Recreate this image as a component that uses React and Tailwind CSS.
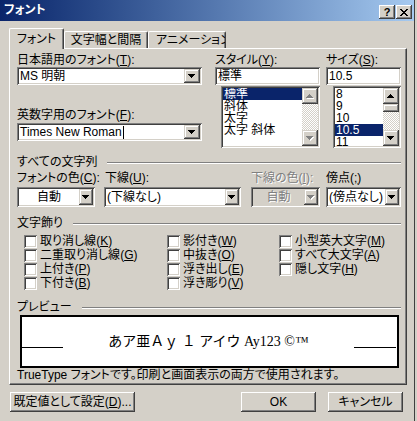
import React from 'react';

const raisedBtn = "bg-[#d4d0c8] shadow-[inset_-1px_-1px_0_#404040,inset_1px_1px_0_#ffffff,inset_-2px_-2px_0_#808080,inset_2px_2px_0_#d4d0c8]";
const raisedCtl = "bg-[#d4d0c8] shadow-[inset_-1px_-1px_0_#404040,inset_1px_1px_0_#d4d0c8,inset_-2px_-2px_0_#808080,inset_2px_2px_0_#ffffff]";
const sunken = "shadow-[inset_1px_1px_0_#808080,inset_-1px_-1px_0_#ffffff,inset_2px_2px_0_#404040,inset_-2px_-2px_0_#d4d0c8]";
const dither = "bg-[repeating-conic-gradient(#d4d0c8_0%_25%,#ffffff_0%_50%)] bg-[length:2px_2px]";

const UP = "M3 0h1v1h1v1h1v1h1v1H0V3h1V2h1V1h1z";
const DOWN = "M0 0h7v1H6v1H5v1H4v1H3V3H2V2H1V1H0z";

function Arrow({ up = false, disabled = false }) {
  const d = up ? UP : DOWN;
  return (
    <svg width="8" height="5" viewBox="0 0 8 5" shapeRendering="crispEdges">
      {disabled && <path d={d} fill="#ffffff" transform="translate(1 1)" />}
      <path d={d} fill={disabled ? '#808080' : '#000000'} />
    </svg>
  );
}

function Label({ text, k, after = ':', disabled = false, className = '' }) {
  return (
    <div className={`h-[13px] leading-[13px] whitespace-nowrap ${disabled ? 'text-[#808080] [text-shadow:1px_1px_0_#ffffff]' : ''} ${className}`}>
      {text}(<span className="underline underline-offset-[1px]">{k}</span>){after}
    </div>
  );
}

function Combo({ className = '', children, disabled = false, center = false, btnW = 'w-[16px]' }) {
  return (
    <div className={`flex p-[2px] ${sunken} ${disabled ? 'bg-[#d4d0c8] text-[#808080] [text-shadow:1px_1px_0_#ffffff]' : 'bg-white'} ${className}`}>
      <div className={`flex-1 flex items-center overflow-hidden whitespace-nowrap ${center ? 'justify-center' : 'pl-[1px]'}`}>
        {children}
      </div>
      <div className={`${btnW} h-full flex items-center justify-center ${raisedCtl}`}>
        <Arrow disabled={disabled} />
      </div>
    </div>
  );
}

function ScrollBar({ disabled = false, thumb = false }) {
  return (
    <div className="w-[16px] h-full flex flex-col">
      <div className={`h-[16px] flex items-center justify-center ${raisedCtl}`}>
        <Arrow up disabled={disabled} />
      </div>
      <div className={`flex-1 ${dither}`}>
        {thumb && <div className={`h-[8px] ${raisedCtl}`} />}
      </div>
      <div className={`h-[16px] flex items-center justify-center ${raisedCtl}`}>
        <Arrow disabled={disabled} />
      </div>
    </div>
  );
}

function ListBox({ items, selected, className = '', disabledBar = false, thumb = false }) {
  return (
    <div className={`flex p-[2px] bg-white ${sunken} ${className}`}>
      <div className="flex-1 overflow-hidden">
        {items.map((it) => (
          <div
            key={it}
            className={`h-[12px] leading-[12px] pl-[1px] whitespace-nowrap ${it === selected ? 'bg-[#0a246a] text-white' : ''}`}
          >
            {it}
          </div>
        ))}
      </div>
      <ScrollBar disabled={disabledBar} thumb={thumb} />
    </div>
  );
}

function Group({ children, className = '' }) {
  return (
    <div className={`flex items-center h-[13px] leading-[13px] ${className}`}>
      <span className="whitespace-nowrap">{children}</span>
      <div className="flex-1 ml-[10px] h-[2px] border-t border-t-[#808080] border-b border-b-white" />
    </div>
  );
}

function Check({ text, k }) {
  return (
    <div className="h-[14px] flex items-center">
      <div className={`w-[13px] h-[13px] bg-white ${sunken}`} />
      <span className="ml-[3px] leading-[13px] whitespace-nowrap">
        {text}(<span className="underline underline-offset-[1px]">{k}</span>)
      </span>
    </div>
  );
}

function Tab({ children, active = false, className = '' }) {
  return (
    <div
      className={`flex items-center justify-center bg-[#d4d0c8] border-l border-t border-l-white border-t-white border-r border-r-[#404040] rounded-t-[2px] shadow-[inset_-1px_0_0_#808080] whitespace-nowrap ${active ? 'h-[21px] -mb-[1px] relative z-10' : 'h-[17px]'} ${className}`}
    >
      {children}
    </div>
  );
}

export default function App() {
  return (
    <div className="w-[417px] h-[421px] bg-[#d4d0c8] overflow-hidden text-[12px] leading-[13px] text-black font-['Liberation_Sans','Noto_Sans_CJK_JP',sans-serif] [font-feature-settings:'palt']">
      <div className="w-[415px] h-full border-r border-r-[#404040] flex flex-col">
        {/* Title bar */}
        <div className="h-[21px] flex bg-linear-to-r from-[#0a246a] to-[#a6caf0] pl-[4px] pr-[2px]">
          <span className="self-center text-white font-bold text-[12px]">フォント</span>
          <div className="ml-auto mt-[5px] flex gap-[1px]">
            <div className={`w-[16px] h-[14px] flex items-center justify-center font-bold text-[11px] leading-[11px] ${raisedBtn}`}>?</div>
            <div className={`w-[16px] h-[14px] flex items-center justify-center ${raisedBtn}`}>
              <svg width="8" height="7" viewBox="0 0 8 7" shapeRendering="crispEdges">
                <path d="M0 0h2v1h1v1h2V1h1V0h2v1H7v1H6v1H5v1h1v1h1v1h1v1H6V6H5V5H3v1H2v1H0V6h1V5h1V4h1V3H2V2H1V1H0z" fill="#000" />
              </svg>
            </div>
          </div>
        </div>

        {/* Tabs */}
        <div className="flex items-end h-[20px] ml-[9px] mt-[7px]">
          <Tab active className="w-[55px]">フォント</Tab>
          <Tab className="w-[84px]">文字幅と間隔</Tab>
          <Tab className="w-[78px] justify-start pl-[7px] overflow-hidden">アニメーション</Tab>
        </div>

        {/* Panel */}
        <div className="ml-[9px] w-[398px] h-[337px] border-t border-l border-t-white border-l-white border-r border-b border-r-[#404040] border-b-[#404040] shadow-[inset_-1px_-1px_0_#808080] pl-[7px] pr-[5px] pt-[5px] flex flex-col">
          {/* Fonts / style / size */}
          <div className="flex">
            <div className="w-[185px] flex flex-col">
              <Label text="日本語用のフォント" k="T" />
              <Combo className="h-[18px]">MS 明朝</Combo>
              <Label text="英数字用のフォント" k="F" className="mt-[24px]" />
              <Combo className="h-[18px] mt-[1px]">
                <span>Times New Roman</span>
                <span className="w-[1px] h-[13px] bg-black ml-[1px]" />
              </Combo>
            </div>
            <div className="w-[105px] ml-[13px] flex flex-col">
              <Label text="スタイル" k="Y" />
              <div className={`h-[18px] bg-white ${sunken} pl-[3px] flex items-center`}>標準</div>
              <ListBox
                className="ml-[6px] mt-[1px] h-[62px]"
                items={['標準', '斜体', '太字', '太字 斜体']}
                selected="標準"
                disabledBar
              />
            </div>
            <div className="w-[75px] ml-[6px] flex flex-col">
              <Label text="サイズ" k="S" />
              <div className={`h-[18px] bg-white ${sunken} pl-[3px] flex items-center`}>10.5</div>
              <ListBox
                className="ml-[7px] mt-[1px] h-[62px]"
                items={['8', '9', '10', '10.5', '11']}
                selected="10.5"
                thumb
              />
            </div>
          </div>

          {/* All text */}
          <Group className="mt-[8px]">すべての文字列</Group>
          <div className="flex mt-[3px]">
            <div className="w-[78px] flex flex-col">
              <Label text="フォントの色" k="C" />
              <Combo className="h-[20px] mt-[2px]" center btnW="w-[14px]">自動</Combo>
            </div>
            <div className="w-[137px] ml-[9px] flex flex-col">
              <Label text="下線" k="U" className="pl-[1px]" />
              <Combo className="h-[20px] mt-[2px]" btnW="w-[14px]">(下線なし)</Combo>
            </div>
            <div className="w-[69px] ml-[10px] flex flex-col">
              <Label text="下線の色" k="I" disabled />
              <Combo className="h-[20px] mt-[2px]" center disabled btnW="w-[14px]">自動</Combo>
            </div>
            <div className="w-[75px] ml-[6px] flex flex-col">
              <Label text="傍点" k=";" after="" />
              <Combo className="h-[20px] mt-[2px]" btnW="w-[14px]">(傍点なし)</Combo>
            </div>
          </div>

          {/* Effects */}
          <Group className="mt-[10px]">文字飾り</Group>
          <div className="flex mt-[4px] pl-[7px]">
            <div className="w-[143px] flex flex-col">
              <Check text="取り消し線" k="K" />
              <Check text="二重取り消し線" k="G" />
              <Check text="上付き" k="P" />
              <Check text="下付き" k="B" />
            </div>
            <div className="w-[112px] flex flex-col">
              <Check text="影付き" k="W" />
              <Check text="中抜き" k="O" />
              <Check text="浮き出し" k="E" />
              <Check text="浮き彫り" k="V" />
            </div>
            <div className="flex flex-col">
              <Check text="小型英大文字" k="M" />
              <Check text="すべて大文字" k="A" />
              <Check text="隠し文字" k="H" />
            </div>
          </div>

          {/* Preview */}
          <Group className="mt-[11px]">プレビュー</Group>
          <div className="mt-[1px] ml-[3px] w-[379px] h-[53px] bg-white border-2 border-black flex items-center">
            <div className="w-[41px] h-[1px] bg-black mt-[11px]" />
            <div className="flex-1 text-center whitespace-nowrap text-[14px] leading-[16px] [font-feature-settings:normal] font-['Liberation_Serif','Noto_Sans_CJK_JP',serif]">
              あア亜Ａｙ １ アイウ Ay123 ©™
            </div>
            <div className="w-[42px] h-[1px] bg-black mt-[11px] mr-[1px]" />
          </div>
          <div className="mt-[1px] h-[13px] leading-[13px] whitespace-nowrap">
            TrueType フォントです。印刷と画面表示の両方で使用されます。
          </div>
        </div>

        {/* Buttons */}
        <div className="flex mt-[7px]">
          <div className={`ml-[10px] w-[125px] h-[20px] flex items-center justify-center whitespace-nowrap ${raisedBtn}`}>
            既定値として設定(<span className="underline underline-offset-[1px]">D</span>)...
          </div>
          <div className={`ml-[106px] w-[75px] h-[20px] flex items-center justify-center ${raisedBtn}`}>OK</div>
          <div className={`ml-[12px] w-[75px] h-[20px] flex items-center justify-center ${raisedBtn}`}>キャンセル</div>
        </div>
      </div>
    </div>
  );
}
